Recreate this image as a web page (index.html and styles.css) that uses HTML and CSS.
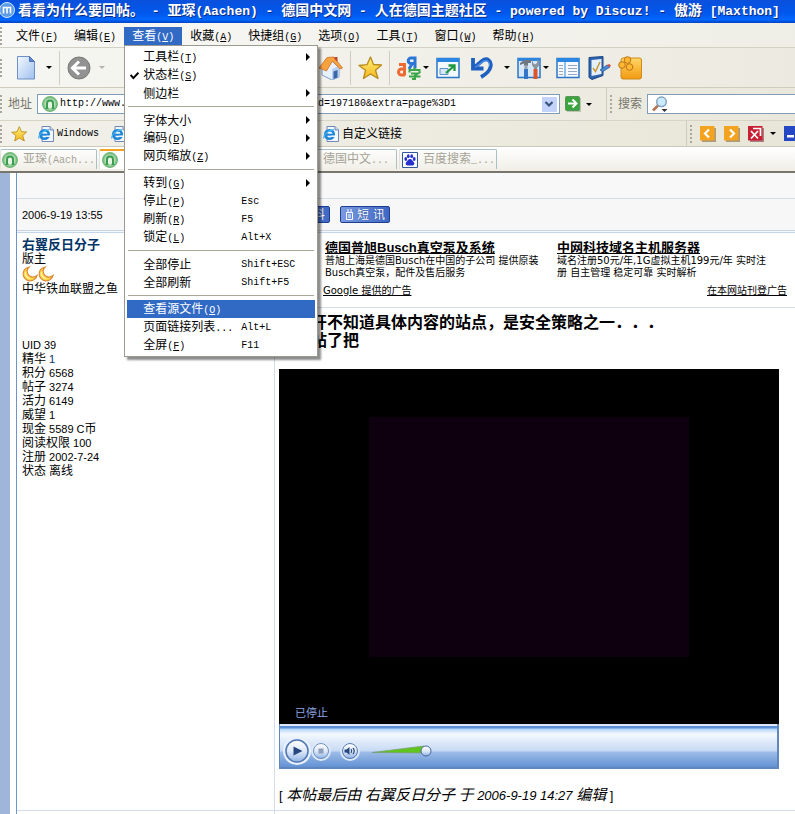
FILE: index.html
```html
<!DOCTYPE html>
<html lang="zh-CN">
<head>
<meta charset="utf-8">
<title>看看为什么要回帖。</title>
<link rel="stylesheet" href="styles.css">
</head>
<body>
<svg class="defs" aria-hidden="true">
  <defs>
    <linearGradient id="gPage" x1="0" y1="0" x2="1" y2="1"><stop offset="0" stop-color="#f4f9ff"/><stop offset="1" stop-color="#9fc0ee"/></linearGradient>
    <linearGradient id="gOrange" x1="0" y1="0" x2="0" y2="1"><stop offset="0" stop-color="#ffd768"/><stop offset="1" stop-color="#f29a10"/></linearGradient>
    <radialGradient id="gGreen"><stop offset="0.4" stop-color="#e6f6e4"/><stop offset="1" stop-color="#5cb468"/></radialGradient>
    <linearGradient id="gStar" x1="0" y1="0" x2="0" y2="1"><stop offset="0" stop-color="#fff27a"/><stop offset="1" stop-color="#f5b51c"/></linearGradient>
    <linearGradient id="gBall" x1="0" y1="0" x2="0" y2="1"><stop offset="0" stop-color="#ffffff"/><stop offset="0.5" stop-color="#dfe9f8"/><stop offset="1" stop-color="#8fb2e4"/></linearGradient>
    <symbol id="ie" viewBox="0 0 16 16">
      <path d="M4 .5h8l3.500 3.500v11.500H4z" fill="#f4f8ff" stroke="#7289b8"/><path d="M12 .5V4h3.500" fill="#c9d8f2" stroke="#7289b8"/>
      <circle cx="6.500" cy="8.500" r="4.300" fill="none" stroke="#1e86d8" stroke-width="2.600"/>
      <path d="M3 8.700h7.500" stroke="#1e86d8" stroke-width="2"/><path d="M8.500 10.200h4" stroke="#f4f8ff" stroke-width="1.500"/>
      <path d="M.8 12.500C0 9 5 4 11 3.600" fill="none" stroke="#45b4ee" stroke-width="1.200"/>
    </symbol>
    <symbol id="site" viewBox="0 0 16 16">
      <circle cx="8" cy="8" r="7.500" fill="url(#gGreen)" stroke="#74b87a"/>
      <path d="M5 12.500V7.500a3 3 0 0 1 6 0v5" fill="none" stroke="#3c9c50" stroke-width="2"/><path d="M3.500 12.500h3M9.500 12.500h3" stroke="#3c9c50"/>
    </symbol>
    <symbol id="star" viewBox="0 0 24 24"><path d="M12.500 1l3 7.500 8 .5-6 5.300 2.500 8.200-7.500-4.500-7 4.500 2-8.200L1 9.500l8-.8z" fill="url(#gStar)" stroke="#b98a1c" stroke-width="1.300" stroke-linejoin="round"/></symbol>
    <symbol id="moon" viewBox="0 0 16 16"><path d="M7 1a7 7 0 1 0 8 8.500A5 5 0 0 1 7 1z" fill="#ffd84a" stroke="#dd8b3a" stroke-width="1.200"/><path d="M3.500 6.500c-.5 3 1.500 5.500 4.500 6" fill="none" stroke="#fff6ae" stroke-width="1.300"/></symbol>
  </defs>
</svg>

<header class="titlebar">
  <svg class="logo" viewBox="0 0 16 16"><circle cx="7" cy="8" r="7.500" fill="#5d9de6" stroke="#d4e7ff"/><path d="M3.500 11.500V5.500h7v6M7 5.500v6" fill="none" stroke="#fff" stroke-width="1.600"/></svg>
  <h1>看看为什么要回帖。<i> - </i>亚琛<i>(Aachen) - </i>德国中文网<i> - </i>人在德国主题社区<i> - powered by Discuz! - </i>傲游<i> [Maxthon]</i></h1>
</header>

<nav class="menubar grip">
  <button>文件<i>(<u>F</u>)</i></button>
  <button>编辑<i>(<u>E</u>)</i></button>
  <div class="dropdown">
    <button class="open">查看<i>(<u>V</u>)</i></button>
    <div class="menu">
      <button><span>工具栏<i>(<u>T</u>)</i></span><b class="more"></b></button>
      <button><svg class="tick" viewBox="0 0 8 8"><path d="M.5 3.500L3 6.300 7.500 1.500" fill="none" stroke="#000" stroke-width="1.800"/></svg><span>状态栏<i>(<u>S</u>)</i></span></button>
      <button><span>侧边栏</span><b class="more"></b></button>
      <hr>
      <button><span>字体大小</span><b class="more"></b></button>
      <button><span>编码<i>(<u>D</u>)</i></span><b class="more"></b></button>
      <button><span>网页缩放<i>(<u>Z</u>)</i></span><b class="more"></b></button>
      <hr>
      <button><span>转到<i>(<u>G</u>)</i></span><b class="more"></b></button>
      <button><span>停止<i>(<u>P</u>)</i></span><i>Esc</i></button>
      <button><span>刷新<i>(<u>R</u>)</i></span><i>F5</i></button>
      <button><span>锁定<i>(<u>L</u>)</i></span><i>Alt+X</i></button>
      <hr>
      <button><span>全部停止</span><i>Shift+ESC</i></button>
      <button><span>全部刷新</span><i>Shift+F5</i></button>
      <hr>
      <button class="current"><span>查看源文件<i>(<u>O</u>)</i></span></button>
      <button><span>页面链接列表<i>...</i></span><i>Alt+L</i></button>
      <button><span>全屏<i>(<u>F</u>)</i></span><i>F11</i></button>
    </div>
  </div>
  <button>收藏<i>(<u>A</u>)</i></button>
  <button>快捷组<i>(<u>G</u>)</i></button>
  <button>选项<i>(<u>O</u>)</i></button>
  <button>工具<i>(<u>T</u>)</i></button>
  <button>窗口<i>(<u>W</u>)</i></button>
  <button>帮助<i>(<u>H</u>)</i></button>
</nav>

<div class="toolbar grip">
  <div class="tools nav-tools">
    <button class="tool split" aria-label="新建"><svg viewBox="0 0 24 24"><path d="M3.500.5h12l5 5v17.500h-17z" fill="url(#gPage)" stroke="#6d8fcb"/><path d="M15.500.5v5h5z" fill="#5f88cf" stroke="#4c73b8"/></svg><b class="caret"></b></button>
    <span class="rule"></span>
    <button class="tool split" aria-label="后退"><svg viewBox="0 0 24 24"><circle cx="12" cy="12" r="11" fill="#929292" stroke="#777"/><path d="M12 5.500L5.500 12l6.500 6.500M6 12h13" fill="none" stroke="#fff" stroke-width="3"/></svg><b class="caret dim"></b></button>
  </div>
  <div class="tools">
    <button class="tool" aria-label="主页"><svg viewBox="0 0 24 24"><path d="M3 11l8-8 9 9v9l-7 3-10-5z" fill="#e9f1fd" stroke="#7d9cd0"/><path d="M13 13l7-3v11l-7 3z" fill="#b9cff0"/><path d="M0 12L8 1.500l7-.5 8.500 11-2.500 1-7.500-8-6 10z" fill="#f7a23c" stroke="#cc7430" stroke-width=".8"/><path d="M15.500 1h3v5l-3-3z" fill="#b8482f"/><path d="M14.500 15.500l4-1.500v7.500l-4 1.500z" fill="#3a66a8"/></svg></button>
    <span class="rule"></span>
    <button class="tool" aria-label="收藏"><svg><use href="#star"/></svg></button>
    <span class="rule"></span>
    <button class="tool split" aria-label="翻译"><svg viewBox="0 0 24 24"><g fill="none" stroke-width="3"><path d="M2 8.500h5.500v11M8 13H4.500a3 3 0 0 0 0 6H8" stroke="#ee6a35"/><path d="M18 .5v12M18 2h-4a2.500 2.500 0 0 0 0 5.500h4M15 8l-3 5" stroke="#2b76d6"/><path d="M17.500 11.500v2M12.500 16.500v-2.500h10v2.500M14 17.500h7l-3 2v3.500h-3M12 20.500h11.500" stroke="#3aa648" stroke-width="2"/></g></svg><b class="caret"></b></button>
    <button class="tool" aria-label="全屏"><svg viewBox="0 0 24 24"><path d="M1 2.500h22v19H1z" fill="#f3faff" stroke="#2b76c8" stroke-width="1.500"/><path d="M1 2h22v4H1z" fill="#2b86e2"/><path d="M4 12.500h8v6H4z" fill="#d5e7f8" stroke="#5f92c8"/><path d="M10 17l8-7M12.500 9.500H18.500v5.500" fill="none" stroke="#22983e" stroke-width="2.300"/></svg></button>
    <button class="tool split undo" aria-label="撤销"><svg viewBox="0 0 24 24"><path d="M3 2v10.500h10.500M3.500 12L12 5c5-4 10 0 8.500 6-.8 4-4 7-9.500 10" fill="none" stroke="#1e5fc0" stroke-width="3.800"/><path d="M5 11.500L13 5.500c4-2 7 0 6.500 4.500" fill="none" stroke="#4d94e8" stroke-width="1.200"/></svg><b class="caret"></b></button>
    <button class="tool split" aria-label="工具"><svg viewBox="0 0 24 24"><path d="M1 2.500h22v19H1z" fill="#d6e8fa" stroke="#2b76c8" stroke-width="1.500"/><path d="M1 2h22v3H1z" fill="#2b86e2"/><path d="M3 7l4-3h7v3h-3v3H7V7.500L3 9z" fill="#6f7780"/><path d="M7.500 9h3v7h-3z" fill="#9aa3ad"/><path d="M7 13h4v10H7z" fill="#3477c9"/><path d="M16 3v4l2 1.500L20 7V3l2 2.500v4L20 12v3h-3v-3l-2-3V5.500z" fill="#8c949c"/><path d="M16.500 13h4v10h-4z" fill="#dd542a"/></svg><b class="caret"></b></button>
    <button class="tool" aria-label="侧边栏"><svg viewBox="0 0 24 24"><path d="M1 2.500h22v19H1z" fill="#f6faff" stroke="#2b76c8" stroke-width="1.500"/><path d="M1 2h22v4H1zM8.500 5h1v17h-1z" fill="#2b86e2"/><path d="M3 9.500h4M3 12.500h4M3 15.500h4M3 18.500h4M12 9.500h9M12 12.500h9M12 15.500h9M12 18.500h9" stroke="#93a9c2"/></svg></button>
    <button class="tool" aria-label="填表"><svg viewBox="0 0 24 24"><path d="M2 1.500L16 .5v19L5 23.500l-3-2z" fill="#2d62ad" stroke="#1d4788"/><path d="M4.500 4l10-1v15l-10 2z" fill="#e5f0fc"/><path d="M6 12l2.500 3.500L13 6" fill="none" stroke="#c99b2e" stroke-width="1.500"/><path d="M13 14l7-5 3 2-7 4.500z" fill="#4b8bd6" stroke="#2a5da3" stroke-width=".8"/><path d="M20 9l2.500-1 1.500 2-1.500 1z" fill="#db4936"/></svg></button>
    <button class="tool" aria-label="插件"><svg viewBox="0 0 24 24"><rect x="3" y="2" width="20.500" height="21" rx="2" fill="url(#gOrange)" stroke="#d08a1a"/><g fill="#ffb833" stroke="#bd7512"><circle cx="9.500" cy="4" r="3.300"/><circle cx="4" cy="9" r="3.300"/><circle cx="11.500" cy="11" r="3.300"/></g></svg></button>
  </div>
</div>

<div class="addressbar grip">
  <label for="url">地址</label>
  <div class="field url">
    <svg class="i16"><use href="#site"/></svg>
    <input id="url" type="text" value="http://www.dolc.de/forums/viewthread.php?tid=197180&amp;extra=page%3D1">
    <button class="drop" aria-label="历史"><svg viewBox="0 0 14 14"><path d="M3.500 5L7 8.500 10.500 5" fill="none" stroke="#38527e" stroke-width="2.200"/></svg></button>
  </div>
  <button class="go split" aria-label="转到"><svg class="i16" viewBox="0 0 16 16"><path d="M2 2h14v14H2z" fill="#b7c7b2"/><rect x=".5" y=".5" width="14" height="14" rx="1" fill="#3ca43e" stroke="#5b9458"/><path d="M3 7.500h8M7.500 3.500l4 4-4 4" fill="none" stroke="#fff" stroke-width="2"/></svg><b class="caret"></b></button>
  <div class="searchbar grip">
    <label for="q">搜索</label>
    <div class="field"><svg class="lens" viewBox="0 0 16 16"><path d="M1 14.500L6 9.500" stroke="#b57858" stroke-width="2.800"/><circle cx="9.500" cy="5.800" r="4.800" fill="#c9ebfb" stroke="#7f9fc0" stroke-width="1.400"/><path d="M9.500 13h6l-3 3z" fill="#333"/></svg><input id="q" type="text"></div>
  </div>
</div>

<div class="linkbar grip">
  <svg class="i16"><use href="#star"/></svg>
  <a href="#"><svg class="i16"><use href="#ie"/></svg><i>Windows</i></a>
  <a href="#" class="wide"><svg class="i16"><use href="#ie"/></svg></a>
  <a href="#"><svg class="i16"><use href="#ie"/></svg>自定义链接</a>
  <div class="winbar grip">
    <button aria-label="上一页"><svg class="i16" viewBox="0 0 16 16"><path d="M2 2h14v14H2z" fill="#a99a80"/><path d="M0 0h14.500v14.500H0z" fill="#f3a320"/><path d="M9 3.500L5 7.500l4 4" fill="none" stroke="#fff" stroke-width="2.200"/></svg></button>
    <button aria-label="下一页"><svg class="i16" viewBox="0 0 16 16"><path d="M2 2h14v14H2z" fill="#a99a80"/><path d="M0 0h14.500v14.500H0z" fill="#f3a320"/><path d="M6 3.500l4 4-4 4" fill="none" stroke="#fff" stroke-width="2.200"/></svg></button>
    <button aria-label="关闭" class="split"><svg class="i16" viewBox="0 0 16 16"><path d="M2 2h14v14H2z" fill="#a98080"/><path d="M0 0h14.500v14.500H0z" fill="#c81f34"/><path d="M3 5l7 7.500M10 5l-7 7.500M5 2.500h7.500V10" fill="none" stroke="#fff" stroke-width="1.700"/></svg><b class="caret"></b></button>
    <button aria-label="最小化"><svg class="i16" viewBox="0 0 16 16"><path d="M0 0h15v15H0z" fill="#2448c4"/><path d="M3 9h7v2.500H3z" fill="#fff"/></svg></button>
  </div>
</div>

<div class="tabs">
  <a href="#" class="tab"><svg class="i16"><use href="#site"/></svg><span>亚琛<i>(Aach...</i></span></a>
  <a href="#" class="tab active"><svg class="i16"><use href="#site"/></svg></a>
  <a href="#" class="tab"></a>
  <a href="#" class="tab"><svg class="i16"><use href="#site"/></svg><span>德国中文<i>...</i></span></a>
  <a href="#" class="tab"><svg class="i16" viewBox="0 0 16 16"><path d="M.5.500h15v15H.5z" fill="#fff" stroke="#31579e"/><g fill="#2530cf"><ellipse cx="3.800" cy="7" rx="1.400" ry="1.900"/><ellipse cx="6.300" cy="4.200" rx="1.400" ry="1.900"/><ellipse cx="9.700" cy="4.200" rx="1.400" ry="1.900"/><ellipse cx="12.200" cy="7" rx="1.400" ry="1.900"/><path d="M8 7c2 0 2.500 2 4 3.500 1 1.500 0 3.200-2 3H6c-2 .2-3-1.500-2-3C5.500 9 6 7 8 7z"/></g></svg><span>百度搜索<i>_...</i></span></a>
</div>

<main class="page">
  <div class="thread">
    <div class="spacer"></div>
    <div class="postbar">
      <time><em>2006-9-19 13:55</em></time>
      <div class="actions">
        <button><svg viewBox="0 0 8 11"><path d="M.5.500h7v10h-7zM2 3h4M2 5.500h4M2 8h4" fill="none" stroke="#fff"/></svg><span>资</span><span>料</span></button>
        <button><svg viewBox="0 0 8 11"><path d="M1.500 3.500h6v7h-6zM3 0v3M6 0v3M3 6h3M3 8h3" fill="none" stroke="#fff"/></svg><span>短</span><span>讯</span></button>
      </div>
    </div>
    <article class="post">
      <aside class="author">
        <a href="#" class="name">右翼反日分子</a>
        <p>版主</p>
        <div class="moons"><svg class="i16"><use href="#moon"/></svg><svg class="i16"><use href="#moon"/></svg></div>
        <p>中华铁血联盟之鱼</p>
        <div class="stats">
          <p><em>UID 39</em></p>
          <p>精华<em> <a href="#">1</a></em></p>
          <p>积分<em> 6568</em></p>
          <p>帖子<em> 3274</em></p>
          <p>活力<em> 6149</em></p>
          <p>威望<em> 1</em></p>
          <p>现金<em> 5589 C</em>币</p>
          <p>阅读权限<em> 100</em></p>
          <p>注册<em> 2002-7-24</em></p>
          <p>状态<em> </em>离线</p>
        </div>
      </aside>
      <section class="body">
        <div class="ads">
          <div class="adlist">
            <div class="ad"><a href="#">德国普旭<em>Busch</em>真空泵及系统</a><p>普旭上海是德国Busch在中国的子公司 提供原装<br>Busch真空泵，配件及售后服务</p></div>
            <div class="ad"><a href="#">中网科技域名主机服务器</a><p>域名注册50元/年,1G虚拟主机199元/年 实时注<br>册 自主管理 稳定可靠 实时解析</p></div>
          </div>
          <div class="adfoot"><a href="#">Google 提供的广告</a><a href="#">在本网站刊登广告</a></div>
        </div>
        <p class="text">不打开不知道具体内容的站点，是安全策略之一．．．<br>别看帖了把</p>
        <div class="player">
          <div class="screen"><div class="picture"></div><span>已停止</span></div>
          <div class="controls">
            <button aria-label="播放"><svg class="play" viewBox="0 0 28 28"><circle cx="14" cy="14" r="13" fill="#c9daf3" stroke="#e9f1fc" stroke-width="2"/><circle cx="14" cy="14" r="11" fill="url(#gBall)" stroke="#5478b4" stroke-width="1.500"/><path d="M10.500 9.500l9 4.500-9 4.500z" fill="#26467f"/></svg></button>
            <button aria-label="停止"><svg class="small" viewBox="0 0 20 20"><circle cx="10" cy="10" r="9" fill="url(#gBall)" stroke="#dce8f8" stroke-width="2"/><circle cx="10" cy="10" r="7.500" fill="url(#gBall)" stroke="#6e8fc4"/><path d="M7.500 7.500h5v5h-5z" fill="#8f9fba"/></svg></button>
            <button aria-label="静音" class="mute"><svg class="small" viewBox="0 0 20 20"><circle cx="10" cy="10" r="9" fill="url(#gBall)" stroke="#dce8f8" stroke-width="2"/><circle cx="10" cy="10" r="7.500" fill="url(#gBall)" stroke="#5478b4"/><path d="M4.500 8.500h2l3-2.500v8l-3-2.500h-2z" fill="#26467f"/><path d="M11 8q1.500 2 0 4M13 7q2.500 3 0 6" fill="none" stroke="#26467f" stroke-width="1.200"/></svg></button>
            <svg class="volume" viewBox="0 0 60 14"><path d="M0 8.500L52 2v7z" fill="#5fc51c" stroke="#7d9a78" stroke-width=".7"/><circle cx="54" cy="7" r="5" fill="url(#gBall)" stroke="#4a69a0"/></svg>
          </div>
        </div>
        <p class="edited"><em>[ </em><span>本帖最后由<em> </em>右翼反日分子<em> </em>于<em> 2006-9-19 14:27 </em>编辑</span><em> ]</em></p>
      </section>
    </article>
    <div class="foot"><div></div><div></div></div>
  </div>
</main>
</body>
</html>
```
FILE: styles.css
```css
* { box-sizing: border-box; }
body {
  margin: 0;
  min-height: 100vh;
  display: flex;
  flex-direction: column;
  background: #fff;
  color: #000;
  font: 12px/14px "Liberation Sans", "Noto Sans CJK SC", sans-serif;
  overflow: hidden;
}
p, h1 { margin: 0; }
svg { display: block; flex: none; }
button, input { font: inherit; color: inherit; border: 0; padding: 0; background: none; }
a { color: inherit; }
i { font: normal 10px/14px "Liberation Mono", monospace; white-space: pre; }
em { font-style: normal; font-size: 11px; white-space: pre; }
.defs { position: absolute; width: 0; height: 0; }
.i16 { width: 16px; height: 16px; }

.caret { width: 0; border: 3px solid transparent; border-top-color: #000; border-bottom: 0; }
.caret.dim { border-top-color: #b5b3aa; }
.split { display: flex; align-items: center; }
.grip::before {
  content: "";
  align-self: center;
  flex: none;
  width: 2px;
  height: 18px;
  background: repeating-linear-gradient(#a9a79c 0 2px, transparent 2px 4px);
}

/* title bar */
.titlebar {
  display: flex;
  align-items: center;
  gap: 2px;
  height: 23px;
  padding-bottom: 3px;
  background: linear-gradient(#0a50dc, #0058ee 60%, #0068ff 85%, #0042c4);
  color: #fff;
  white-space: nowrap;
}
.logo { width: 16px; height: 16px; }
.titlebar h1 { font-size: 14px; line-height: 18px; text-shadow: 1px 1px #0a2c86; }
.titlebar i { font-size: 13px; font-weight: bold; }

/* menu bar */
.menubar {
  display: flex;
  align-items: center;
  height: 25px;
  padding-top: 1px;
  border-bottom: 1px solid #d3d0c4;
  background: linear-gradient(90deg, #f8f8f6, #efeee6);
}
.menubar > button, .dropdown > button { height: 18px; padding: 2px 8px 0; white-space: nowrap; }
.menubar > button:first-of-type { margin-left: 6px; }
.dropdown { position: relative; }
.dropdown > .open { display: block; background: #316ac5; color: #fff; }
.menu {
  position: absolute;
  z-index: 2;
  top: 18px;
  left: 0;
  width: 194px;
  padding: 2px;
  border: 1px solid #9c9a90;
  background: #fff;
  box-shadow: 3px 3px 2px rgba(0, 0, 0, .45);
}
.menu button {
  position: relative;
  display: grid;
  grid-template-columns: 98px 1fr;
  align-items: center;
  width: 100%;
  height: 18px;
  padding: 2px 0 0 16px;
  text-align: left;
  white-space: nowrap;
}
.menu .current { background: #316ac5; color: #fff; }
.menu hr { height: 1px; margin: 4px 1px; border: 0; background: #aca899; }
.more { justify-self: end; margin: 0 5px 2px 0; border: 4px solid transparent; border-left-color: #000; border-right: 0; }
.tick { position: absolute; left: 3px; top: 5px; width: 9px; height: 9px; }

/* icon toolbar */
.toolbar {
  display: flex;
  align-items: center;
  height: 40px;
  border-bottom: 1px solid #cfccbe;
  background: linear-gradient(90deg, #f6f6f2, #eceae0);
}
.tools { display: flex; align-items: center; gap: 7px; }
.nav-tools { width: 317px; padding-left: 12px; flex: none; }
.tool svg { width: 24px; height: 24px; }
.tool.split { gap: 2px; }
.nav-tools .tool.split { gap: 8px; }
.tool.undo { margin-left: 3px; }
.tool.undo.split { gap: 10px; }
.rule { width: 1px; height: 34px; background: #cfccc0; }

/* address bar */
.addressbar {
  display: flex;
  align-items: center;
  height: 33px;
  border-bottom: 1px solid #d8d5c6;
  background: linear-gradient(90deg, #f3f3ed, #eae8dc);
}
.addressbar label { margin: 0 5px 0 6px; color: #77756b; white-space: nowrap; }
.field {
  display: flex;
  align-items: center;
  flex: 1;
  height: 20px;
  padding: 0 2px 0 4px;
  border: 1px solid #7f9db9;
  background: #fff;
}
.field input { flex: 1; min-width: 0; height: 16px; padding: 0 2px; font: 10px/16px "Liberation Mono", monospace; outline: 0; }
.drop { width: 15px; height: 15px; background: #c3d3fb; }
.drop svg { width: 14px; height: 14px; }
.go { gap: 5px; margin: 0 14px 0 5px; }
.searchbar {
  display: flex;
  align-items: center;
  width: 189px;
  height: 32px;
  border-left: 1px solid #d0cdc0;
}
.searchbar::before { margin-left: 3px; }
.searchbar .field { margin-right: -2px; }
.lens { width: 16px; height: 16px; }

/* link bar */
.linkbar {
  display: flex;
  align-items: center;
  height: 26px;
  border-bottom: 1px solid #cbc8b8;
  background: linear-gradient(90deg, #f2f1ea, #e8e6d8);
}
.linkbar > svg { margin: 0 11px 0 9px; }
.linkbar a { display: flex; align-items: center; gap: 3px; margin-right: 12px; text-decoration: none; white-space: nowrap; }
.linkbar .wide { width: 200px; }
.winbar { display: flex; align-items: center; gap: 8px; margin-left: auto; margin-right: -5px; height: 25px; border-left: 1px solid #d0cdc0; padding-left: 3px; }
.winbar .split { gap: 6px; }

/* tabs */
.tabs {
  display: flex;
  align-items: flex-end;
  gap: 2px;
  height: 26px;
  border-bottom: 2px solid #77756c;
  padding-bottom: 2px;
  background: linear-gradient(#fff, #f0eee6);
}
.tab {
  display: flex;
  align-items: center;
  gap: 5px;
  flex: none;
  width: 98px;
  height: 20px;
  padding-left: 2px;
  border: 1px solid #a9bfc4;
  border-left-color: #e2e2da;
  border-bottom: 0;
  border-radius: 2px 2px 0 0;
  color: #a5a396;
  text-decoration: none;
  white-space: nowrap;
}
.tab:first-child { width: 97px; padding-left: 1px; }
.tab.active { border-top: 2px solid #f5a21c; background: #fff; }

/* forum page */
.page {
  flex: 1;
  display: flex;
  border-left: 10px solid #9fb5da;
  padding-left: 6px;
}
.thread { flex: 1; display: flex; flex-direction: column; border-left: 1px solid #6f93cb; }
.spacer { height: 26px; border-bottom: 1px solid #d5deea; background: #f8f8f8; }
.postbar {
  display: grid;
  grid-template-columns: 257px 1fr;
  align-items: center;
  height: 34px;
  border-bottom: 3px double #c5d4e8;
  background: #f7f7f7;
}
.postbar time { padding-left: 5px; }
.actions { display: flex; gap: 10px; padding-left: 6px; }
.actions button {
  display: flex;
  align-items: center;
  justify-content: center;
  gap: 4px;
  width: 50px;
  height: 17px;
  border: 1px solid #1c3f94;
  border-radius: 2px;
  background: linear-gradient(90deg, #7b9be0, #3e68c4);
  color: #fff;
  text-shadow: 0 0 1px #16377f;
}
.actions svg { width: 8px; height: 11px; }
.post { display: grid; grid-template-columns: 257px 1fr; }
.author { padding: 5px; }
.author a { color: #036; text-decoration: none; }
.author .name { display: block; font-size: 13px; font-weight: bold; }
.moons { display: flex; }
.stats { margin-top: 42px; }
.body { border-left: 1px solid #d5dcea; }
.ads { padding: 7px 8px 9px 50px; border-bottom: 1px solid #d5dcea; }
.adlist { display: grid; grid-template-columns: 232px 1fr; white-space: nowrap; }
.ad a { display: block; font-size: 13px; line-height: 15px; font-weight: bold; }
.ad em { font-size: 13px; }
.ad p { font: 10px/12px "DejaVu Sans", "Noto Sans CJK SC", sans-serif; }
.adfoot { display: flex; justify-content: space-between; margin: 5px 0 0 -2px; font: 10px/14px "DejaVu Sans", "Noto Sans CJK SC", sans-serif; }
.text { padding: 6px 4px 19px; font-size: 16px; line-height: 18px; font-weight: bold; text-spacing-trim: space-all; }
.player { width: 500px; margin-left: 4px; max-width: 100%; }
.screen { position: relative; padding: 48px 90px 67px; background: #000; }
.picture { height: 240px; background: #0e000e; }
.screen span { position: absolute; left: 16px; bottom: 4px; font-size: 11px; color: #8ea6e8; }
.controls {
  display: flex;
  align-items: center;
  height: 45px;
  padding: 10px 3px 0;
  border: solid #5f86bd;
  border-width: 0 2px 2px 1px;
  background: linear-gradient(#dfe9f8 0 2px, #5d8fd6 2px 4px, #b5d6fa 5px, #f4f9ff 10px, #c6d9f3 27px, #9dbce8 28px, #6392d4);
}
.controls button svg { display: block; }
.play { width: 28px; height: 28px; }
.small { width: 20px; height: 20px; }
.mute { margin-left: 9px; }
.volume { width: 60px; height: 14px; margin-left: 12px; }
.edited { margin-top: 17px; padding: 0 4px 5px; font-size: 15px; line-height: 18px; white-space: nowrap; }
.edited em { font-size: 13px; }
.edited span, .edited span em { font-style: italic; }
.foot { flex: 1; display: grid; grid-template-columns: 257px 1fr; border-top: 1px solid #d5dcea; }
.foot div + div { border-left: 1px solid #d5dcea; }
```
